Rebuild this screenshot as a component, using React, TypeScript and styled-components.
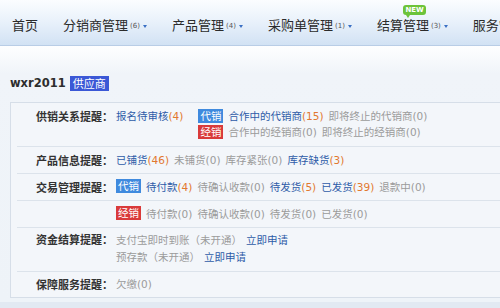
import styled, { createGlobalStyle } from 'styled-components'

const GlobalStyle = createGlobalStyle`
  html, body {
    margin: 0;
    padding: 0;
    background: #e2e9f2;
  }
  body {
    width: 500px;
    height: 308px;
    overflow: hidden;
    font-family: "DejaVu Sans", "Noto Sans CJK SC", sans-serif;
  }
`

const CJK = `"Noto Sans CJK SC", sans-serif`

interface NavItemData {
  label: string
  count?: number
  isNew?: boolean
}

const navItems: NavItemData[] = [
  { label: '首页' },
  { label: '分销商管理', count: 6 },
  { label: '产品管理', count: 4 },
  { label: '采购单管理', count: 1 },
  { label: '结算管理', count: 3, isNew: true },
  { label: '服务管理', count: 2 },
]

type Tone = 'link' | 'muted'

interface Entry {
  text: string
  count: number
  tone: Tone
}

const Stat = ({ text, count, tone }: Entry) => (
  <StatText $tone={tone}>
    {text}
    <Count $tone={tone}>({count})</Count>
  </StatText>
)

const StatList = ({ items }: { items: Entry[] }) => (
  <>
    {items.map((item) => (
      <Stat key={item.text} {...item} />
    ))}
  </>
)

export default function App() {
  return (
    <>
      <GlobalStyle />
      <Nav>
        {navItems.map((item) => (
          <NavItem key={item.label}>
            {item.label}
            {item.count !== undefined && (
              <>
                <NavCount>({item.count})</NavCount>
                <Caret />
              </>
            )}
            {item.isNew && <NewBadge>NEW</NewBadge>}
          </NavItem>
        ))}
      </Nav>
      <Main>
        <Title>
          wxr2011 <RoleTag>供应商</RoleTag>
        </Title>
        <Box>
          <Row>
            <Label>供销关系提醒：</Label>
            <Content>
              <Stat text="报名待审核" count={4} tone="link" />
              <Stack>
                <Line>
                  <Tag $kind="dai">代销</Tag>
                  <StatList
                    items={[
                      { text: '合作中的代销商', count: 15, tone: 'link' },
                      { text: '即将终止的代销商', count: 0, tone: 'muted' },
                    ]}
                  />
                </Line>
                <Line>
                  <Tag $kind="jing">经销</Tag>
                  <StatList
                    items={[
                      { text: '合作中的经销商', count: 0, tone: 'muted' },
                      { text: '即将终止的经销商', count: 0, tone: 'muted' },
                    ]}
                  />
                </Line>
              </Stack>
            </Content>
          </Row>
          <Row>
            <Label>产品信息提醒：</Label>
            <Content>
              <StatList
                items={[
                  { text: '已铺货', count: 46, tone: 'link' },
                  { text: '未铺货', count: 0, tone: 'muted' },
                  { text: '库存紧张', count: 0, tone: 'muted' },
                  { text: '库存缺货', count: 3, tone: 'link' },
                ]}
              />
            </Content>
          </Row>
          <Row>
            <Label>交易管理提醒：</Label>
            <Content>
              <Tag $kind="dai">代销</Tag>
              <StatList
                items={[
                  { text: '待付款', count: 4, tone: 'link' },
                  { text: '待确认收款', count: 0, tone: 'muted' },
                  { text: '待发货', count: 5, tone: 'link' },
                  { text: '已发货', count: 39, tone: 'link' },
                  { text: '退款中', count: 0, tone: 'muted' },
                ]}
              />
            </Content>
          </Row>
          <Row>
            <Label />
            <Content>
              <Tag $kind="jing">经销</Tag>
              <StatList
                items={[
                  { text: '待付款', count: 0, tone: 'muted' },
                  { text: '待确认收款', count: 0, tone: 'muted' },
                  { text: '待发货', count: 0, tone: 'muted' },
                  { text: '已发货', count: 0, tone: 'muted' },
                ]}
              />
            </Content>
          </Row>
          <Row $tight>
            <Label>资金结算提醒：</Label>
            <Stack>
              <Line>
                <Plain>支付宝即时到账（未开通）</Plain>
                <Apply>立即申请</Apply>
              </Line>
              <Line>
                <Plain>预存款（未开通）</Plain>
                <Apply>立即申请</Apply>
              </Line>
            </Stack>
          </Row>
          <Row>
            <Label>保障服务提醒：</Label>
            <Content>
              <Stat text="欠缴" count={0} tone="muted" />
            </Content>
          </Row>
        </Box>
      </Main>
    </>
  )
}

const Nav = styled.nav`
  height: 45px;
  display: flex;
  align-items: center;
  gap: 25px;
  padding-left: 12px;
  background: linear-gradient(#fbfdff 0%, #eaf2fb 45%, #d2e2f4 100%);
  border-bottom: 1px solid #b9cde6;
  white-space: nowrap;
  overflow: hidden;
`

const NavItem = styled.div`
  position: relative;
  flex: none;
  display: flex;
  align-items: center;
  font-family: ${CJK};
  font-size: 13px;
  color: #2b2b2b;
  line-height: 16px;
  padding-top: 5px;
`

const NavCount = styled.span`
  font-family: "DejaVu Sans", sans-serif;
  font-size: 7px;
  color: #555;
  margin-left: 2px;
  padding-top: 1px;
`

const Caret = styled.span`
  width: 0;
  height: 0;
  margin-left: 3px;
  margin-top: 2px;
  border-left: 2.5px solid transparent;
  border-right: 2.5px solid transparent;
  border-top: 3px solid #3a6fc4;
`

const NewBadge = styled.span`
  position: absolute;
  right: 22px;
  top: -7px;
  padding: 0 2px;
  height: 10px;
  line-height: 10px;
  border-radius: 3px;
  background: #6cc33a;
  color: #fff;
  font-family: "DejaVu Sans", sans-serif;
  font-size: 7px;
  font-weight: bold;

  &::after {
    content: '';
    position: absolute;
    left: 3px;
    bottom: -3px;
    border-left: 2px solid transparent;
    border-right: 2px solid transparent;
    border-top: 3px solid #6cc33a;
  }
`

const Main = styled.main`
  padding: 29px 0 4px 10px;
  background: linear-gradient(#fefeff 0px, #f0f4f9 28px, #eef3f8 100%);
`

const Title = styled.div`
  display: flex;
  align-items: center;
  gap: 4px;
  height: 16px;
  margin-bottom: 11px;
  font-family: "DejaVu Sans", sans-serif;
  font-weight: bold;
  font-size: 11.5px;
  color: #2d2d2d;
`

const RoleTag = styled.span`
  font-family: ${CJK};
  font-weight: normal;
  font-size: 11px;
  line-height: 15px;
  padding: 0 3px;
  background: #3b58d6;
  color: #fff;
`

const Box = styled.section`
  border: 1px solid #d6dee8;
  border-right: none;
  background: #f3f6fa;
`

const Row = styled.div<{ $tight?: boolean }>`
  display: flex;
  align-items: flex-start;
  margin: 0 0 0 6px;
  padding: ${(p) => (p.$tight ? '3px 0 6px' : '5px 0')};
  border-bottom: 1px solid #dce3eb;
  font-size: 10.5px;
  line-height: ${(p) => (p.$tight ? '17px' : '16px')};
  white-space: nowrap;

  &:first-child {
    padding: 5px 0 6px;
  }

  &:last-child {
    border-bottom: none;
    padding: 4px 0 5px;
  }
`

const Label = styled.div`
  width: 96px;
  flex: none;
  text-align: right;
  font-family: ${CJK};
  font-weight: bold;
  font-size: 11px;
  color: #333;
  margin-right: 3px;
`

const Content = styled.div`
  display: flex;
  align-items: flex-start;
`

const Stack = styled.div`
  display: flex;
  flex-direction: column;

  ${Content} > & {
    margin-left: 10px;
  }
`

const Line = styled.div`
  display: flex;
  align-items: center;
  min-height: 16px;
`

const StatText = styled.span<{ $tone: Tone }>`
  margin-right: 5px;
  font-family: ${CJK};
  color: ${(p) => (p.$tone === 'link' ? '#2f5ca8' : '#9b9b9b')};
`

const Count = styled.span<{ $tone: Tone }>`
  font-family: "DejaVu Sans", sans-serif;
  color: ${(p) => (p.$tone === 'link' ? '#e2782f' : '#9b9b9b')};
`

const Tag = styled.span<{ $kind: 'dai' | 'jing' }>`
  font-family: ${CJK};
  height: 14px;
  line-height: 14px;
  padding: 0 2px;
  margin-right: 5px;
  color: #fff;
  background: ${(p) => (p.$kind === 'dai' ? '#3f8ade' : '#d93a3a')};
`

const Plain = styled.span`
  font-family: ${CJK};
  color: #9b9b9b;
  margin-right: 4px;
`

const Apply = styled.span`
  font-family: ${CJK};
  color: #2f5ca8;
`
